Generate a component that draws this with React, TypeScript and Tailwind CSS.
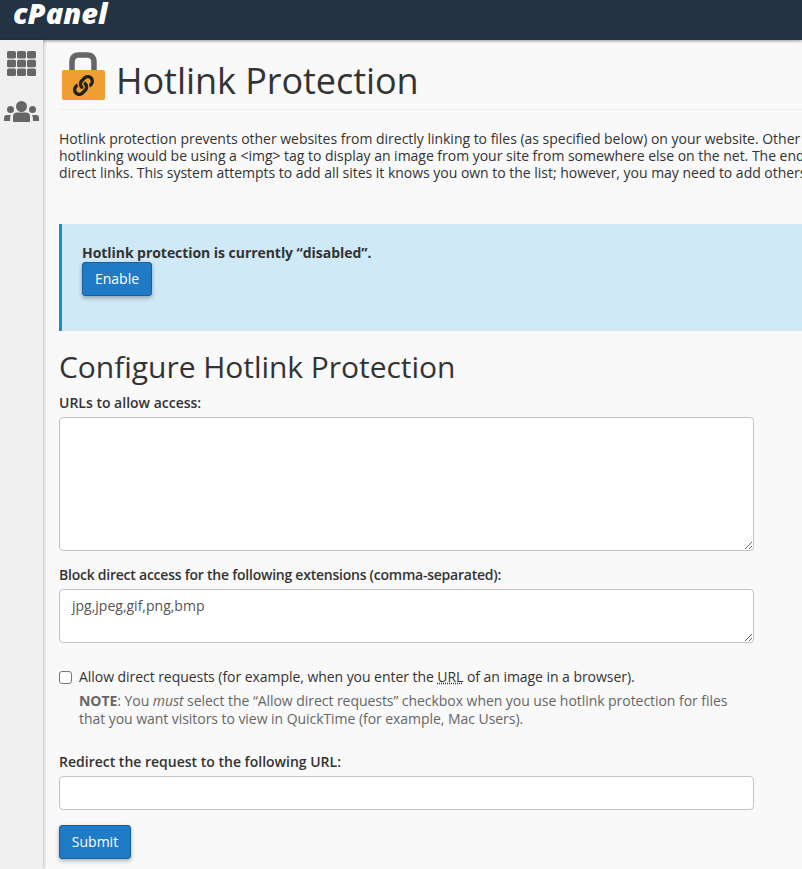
import { FaLink } from 'react-icons/fa';

function GridIcon() {
  return (
    <svg width="29" height="25" viewBox="0 0 29 25" fill="#666">
      {[0, 10, 20].map((x) =>
        [0, 8.75, 17.5].map((y) => <rect key={`${x}-${y}`} x={x} y={y} width="9" height="7.5" rx="1.5" />),
      )}
    </svg>
  );
}

function GroupIcon() {
  return (
    <svg width="35" height="21" viewBox="0 0 35 21" fill="#666">
      <circle cx="17.500" cy="5.500" r="5.500" />
      <path d="M9 21v-6c0-2.500 2-3.500 4-3.500h9c2 0 4 1 4 3.500v6z" />
      <circle cx="6.500" cy="8.500" r="3.500" />
      <path d="M0 20v-3c0-2 1-3 3-3h4c-.6.8-.9 1.800-.9 3v3z" />
      <circle cx="28.500" cy="8.500" r="3.500" />
      <path d="M35 20v-3c0-2-1-3-3-3h-4c.6.8.9 1.800.9 3v3z" />
    </svg>
  );
}

function LockIcon() {
  return (
    <svg width="43" height="48" viewBox="0 0 43 48" className="ml-[3px] shrink-0">
      <path d="M10 20V10C10 4.500 13 3 17 3h8c4 0 7 1.500 7 7v10" fill="none" stroke="#666" strokeWidth="5.500" />
      <rect x="0" y="18" width="43" height="30" rx="2" fill="#f09f33" />
      <FaLink x={11} y={23} size={21} color="#222" />
    </svg>
  );
}

export default function App() {
  return (
    <div className="h-[869px] w-[802px] overflow-hidden bg-[#f9f9f9] font-['Open_Sans',sans-serif] text-[14px] text-[#333]">
      <header className="flex h-10 items-start bg-[#233343] pl-[13px] shadow-[0_1px_3px_rgba(0,0,0,0.4)]">
        <span className="text-[29px] leading-[26px] font-extrabold text-white italic">cPanel</span>
      </header>
      <div className="flex h-[829px]">
        <aside className="flex w-[43px] shrink-0 flex-col items-start bg-[#f0f0f0] pt-[11px] pl-[4px] shadow-[1px_0_3px_rgba(0,0,0,0.25)]">
          <div className="ml-[3px]">
            <GridIcon />
          </div>
          <div className="mt-[25px]">
            <GroupIcon />
          </div>
        </aside>
        <main className="min-w-0 flex-1 overflow-hidden pl-[16px]">
          <div className="flex h-[70px] items-end border-b border-[#eeeeee] pb-[9px]">
            <LockIcon />
            <h1 className="-mb-[3px] ml-[11px] text-[36px] leading-[44px] font-normal tracking-[-0.05px]">Hotlink Protection</h1>
          </div>
          <p className="mt-[20px] w-[800px] text-[14px] leading-[17px] tracking-[-0.02px] whitespace-nowrap">
            Hotlink protection prevents other websites from directly linking to files (as specified below) on your website. Other
            <br />
            hotlinking would be using a &lt;img&gt; tag to display an image from your site from somewhere else on the net. The end
            <br />
            direct links. This system attempts to add all sites it knows you own to the list; however, you may need to add others.
          </p>
          <div className="mt-[43px] h-[107px] border-l-[3px] border-[#1a8fc5] bg-[#cfe9f6] pt-[20px] pl-[20px]">
            <div className="text-[14px] leading-[18px] font-bold tracking-[-0.05px]">Hotlink protection is currently “disabled”.</div>
            <button className="h-[34px] w-[70px] rounded-[3px] border border-[#15609e] bg-[#1f7bc6] pb-[2px] text-[14px] text-white shadow-[0_2px_4px_rgba(0,0,0,0.3)]">Enable</button>
          </div>
          <h2 className="mt-[16px] text-[30px] leading-[40px] font-normal tracking-[-0.04px]">Configure Hotlink Protection</h2>
          <label className="mt-[6px] block text-[14px] leading-[20px] font-semibold">URLs to allow access:</label>
          <textarea className="mt-[4px] block h-[134px] w-[695px] rounded-[4px] border border-[#c4c4c4] bg-white" />
          <label className="mt-[14px] block text-[14px] leading-[20px] font-semibold tracking-[-0.24px]">Block direct access for the following extensions (comma-separated):</label>
          <textarea
            className="mt-[4px] block h-[54px] w-[695px] rounded-[4px] border border-[#c4c4c4] bg-white px-[12px] py-[6px] text-[14px] leading-[20px] text-[#555]"
            defaultValue="jpg,jpeg,gif,png,bmp"
          />
          <div className="mt-[24px] flex items-start">
            <input type="checkbox" className="mt-[4px] h-[13px] w-[13px] appearance-none rounded-[3px] border border-[#777] bg-white" />
            <div className="ml-[7px]">
              <div className="text-[14px] leading-[20px] tracking-[-0.05px]">
                Allow direct requests (for example, when you enter the{' '}
                <abbr className="underline decoration-dotted" title="Uniform Resource Locator">URL</abbr> of an image in a browser).
              </div>
              <div className="mt-[5px] w-[670px] text-[14px] leading-[18px] tracking-[-0.05px] text-[#666]">
                <strong>NOTE</strong>: You <em>must</em> select the “Allow direct requests” checkbox when you use hotlink protection for files that you want visitors to view in QuickTime (for example, Mac Users).
              </div>
            </div>
          </div>
          <label className="mt-[24px] block text-[14px] leading-[20px] font-semibold">Redirect the request to the following URL:</label>
          <input className="mt-[4px] block h-[34px] w-[695px] rounded-[4px] border border-[#c4c4c4] bg-white" />
          <button className="mt-[15px] h-[34px] w-[72px] rounded-[3px] border border-[#15609e] bg-[#1f7bc6] pb-[2px] text-[14px] text-white shadow-[0_2px_4px_rgba(0,0,0,0.3)]">Submit</button>
        </main>
      </div>
    </div>
  );
}
